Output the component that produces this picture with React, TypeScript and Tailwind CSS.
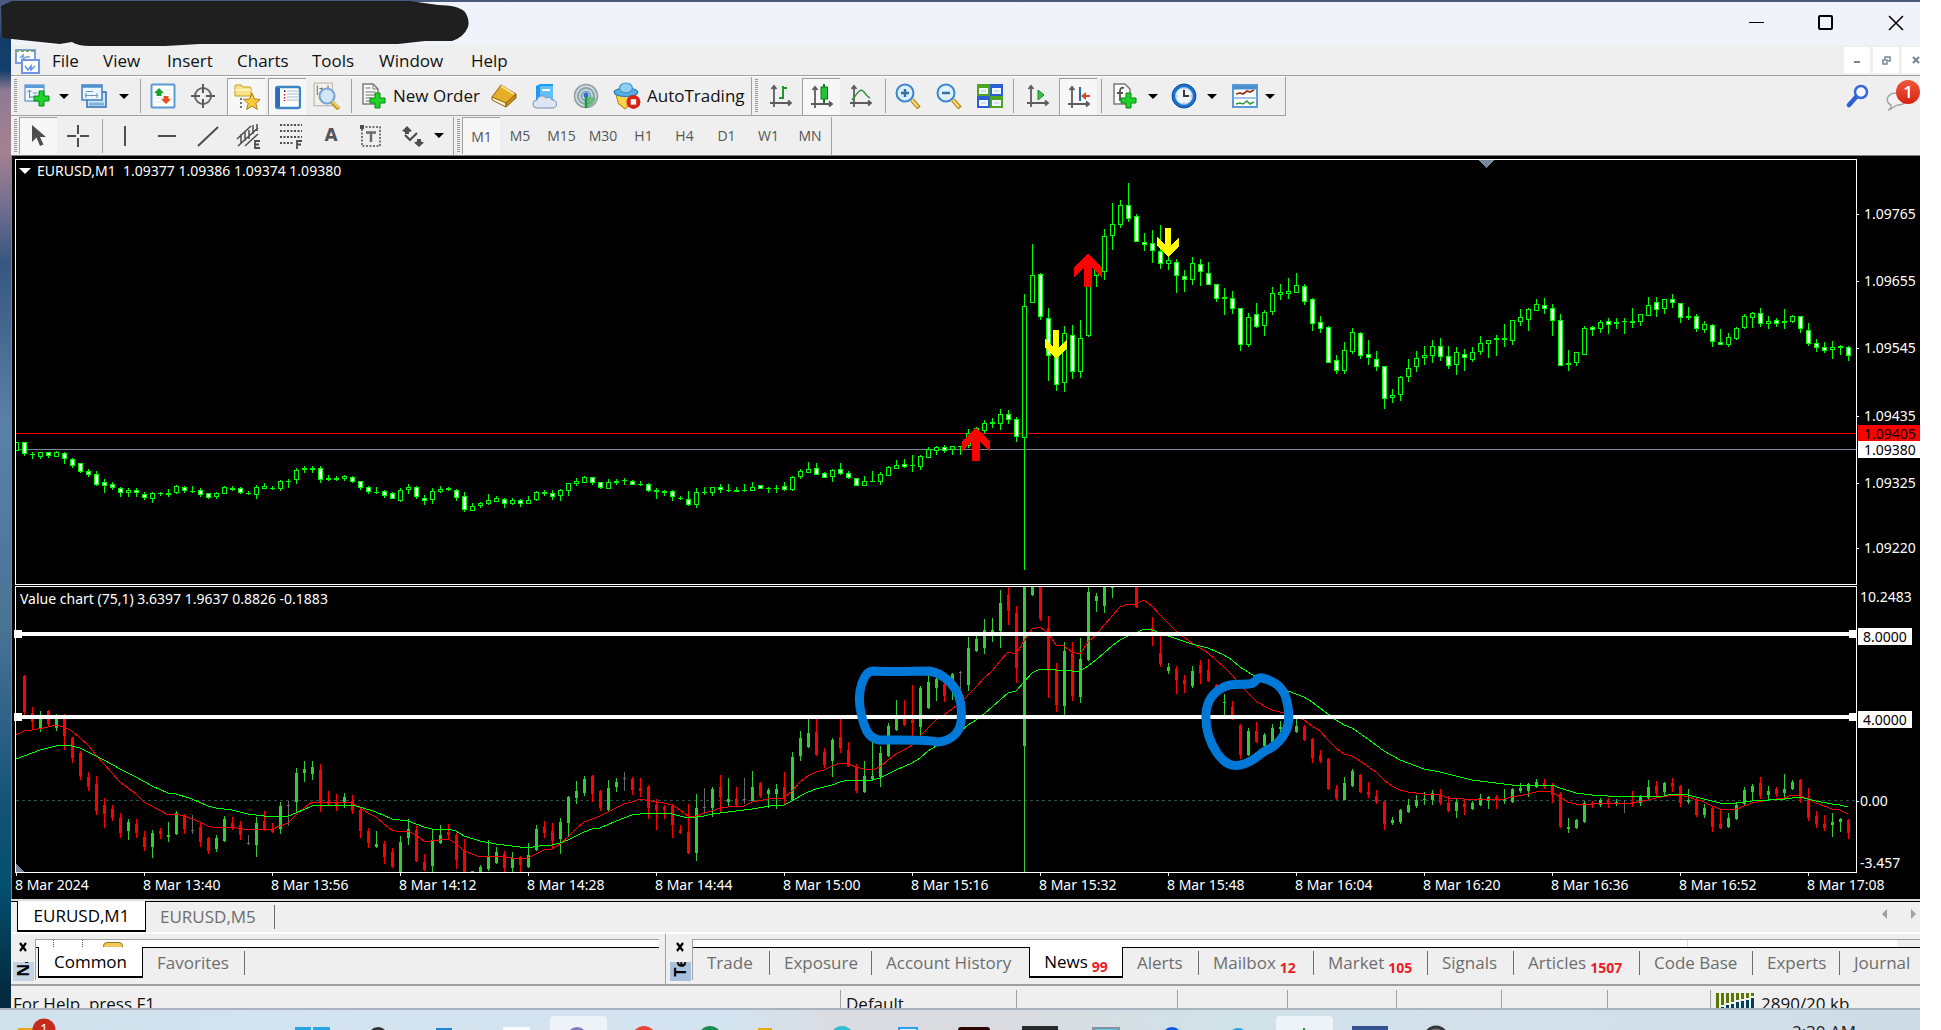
import React from "react";

/* ---------- Series data: kind + high, body top, body bottom, low in plot units ---------- */

const PRICE = `b442,442,451,451 w442,442,454,456 d452,454,455,459 b452,452,457,459 w452,452,456,458 b451,452,457,457 w452,453,459,464 w458,459,466,468 w463,463,472,473 w469,471,475,477
w471,474,485,486 w479,482,486,493 w482,484,488,490 w487,488,493,497 b488,490,493,497 w488,490,493,497 w492,494,498,500 b492,493,499,503 d492,493,494,496 d489,493,495,497
b485,486,493,494 w486,487,491,493 d486,491,492,493 w488,490,495,497 w493,493,498,499 b492,493,497,499 b486,487,494,494 d486,488,490,491 w487,488,493,494 d491,493,494,495
b485,487,495,499 b483,486,489,489 d486,488,489,490 b480,481,489,491 d479,481,482,488 b468,470,480,484 d466,468,470,473 d466,468,470,473 w466,468,480,483 d475,478,480,481
d476,478,480,481 b475,476,479,481 w476,477,482,483 w481,481,488,490 w486,487,492,494 d487,492,493,494 w490,491,496,498 w492,493,499,499 b488,490,501,502 b484,487,490,494
w486,487,497,499 w495,498,501,505 b488,491,500,504 b486,489,492,493 d487,488,490,491 w489,490,498,501 w492,496,510,512 b503,506,511,511 b502,503,506,508 b494,500,504,505
b496,498,502,502 w498,499,504,508 b498,500,504,505 w499,500,504,507 b496,500,504,504 b491,492,500,501 d490,492,494,496 w490,493,497,500 b489,490,496,501 b483,483,491,496
b478,481,484,486 b476,477,483,483 w477,477,483,485 w482,482,488,489 b479,482,489,489 d479,481,483,485 d478,480,481,485 w480,481,485,485 d481,484,485,486 w483,484,491,492
d488,490,492,499 d490,491,493,496 w490,491,497,501 d496,498,499,500 w491,499,505,506 b488,492,505,508 d487,492,493,495 b487,487,493,496 w484,487,490,493 d484,490,491,492
d487,490,492,492 d484,490,491,492 b482,487,491,491 w485,485,489,489 d487,488,489,493 d485,488,489,493 w482,486,490,491 b476,477,490,491 b469,471,477,479 b462,469,473,473
w463,468,475,475 w472,473,478,478 b469,470,477,482 w463,469,474,475 w471,473,478,479 w478,478,486,486 b476,481,486,486 d471,481,482,482 b472,474,482,485 b466,467,476,476
b460,465,469,469 w459,464,467,468 d455,465,466,472 b455,456,467,470 b447,449,458,458 b446,447,451,455 w445,447,451,453 b446,446,450,455 d446,446,447,455 b429,433,446,448
b427,428,436,437 b420,423,431,433 d418,422,424,428 b409,414,424,430 w410,414,420,424 w417,419,437,442 b294,306,438,570 b244,275,303,303 w273,274,317,320 w308,318,356,381
w340,345,385,391 b326,333,383,392 w325,335,372,379 b320,338,372,378 b283,283,336,337 b262,265,276,287 b229,236,272,280 b203,224,236,250 b200,205,225,228 w183,205,219,222
w214,216,242,242 w233,242,245,251 w230,243,251,263 w225,251,264,269 b256,260,264,270 w259,262,276,293 w270,276,280,292 b257,263,280,285 w259,264,272,286 w262,273,285,285
w284,284,299,302 d288,297,299,315 w291,298,309,314 w308,308,345,351 b313,317,345,347 w303,314,327,328 b310,312,326,336 b287,293,312,315 b284,292,295,300 b278,291,294,299
b273,285,293,293 w284,286,302,305 w298,299,324,331 w316,322,329,333 w326,327,363,363 w355,360,371,374 b342,350,371,374 b328,332,352,354 w332,333,356,359 w340,354,358,365
w351,359,367,371 w366,366,399,409 b389,395,398,403 b376,377,395,401 b359,368,377,382 b351,358,367,372 b346,355,358,365 b340,346,356,363 w338,346,357,361 w346,356,366,369
b347,352,365,375 w349,354,358,371 b347,352,360,362 b336,343,352,355 b340,340,344,358 d335,338,340,356 d324,338,340,347 b320,320,341,345 b309,317,322,326 b308,309,320,331
b299,304,311,311 w298,305,309,314 w304,308,321,336 w314,320,366,366 d350,363,365,371 b352,352,363,366 b326,328,355,355 w326,327,330,336 b320,322,329,333 w318,321,325,334
d318,322,324,329 d318,321,322,334 d308,321,323,328 b314,314,322,326 b297,305,316,316 w297,302,310,317 b299,299,309,314 w294,299,303,308 w303,303,318,323 d307,316,318,320
w314,316,329,332 b321,324,330,333 w324,325,342,347 w329,342,345,345 b333,337,345,347 b327,328,339,340 b314,316,328,329 b312,313,318,328 w308,313,324,327 b316,321,324,329
w318,320,324,327 d309,321,323,329 b315,316,322,323 w316,316,329,333 w323,330,344,346 w339,343,348,352 w342,347,351,353 b341,347,350,359 d345,346,348,355 w346,347,356,361`;

const VALUE = `n r675,676,712,715 r707,713,722,730 g711,717,728,732 r710,711,724,727 g714,717,728,731 r714,715,736,750 r737,738,758,763 r751,753,776,780 r772,777,787,791
r776,784,811,815 r798,805,814,828 r805,809,818,821 r813,818,833,838 g819,822,831,840 r819,824,833,838 r831,837,847,851 g830,833,847,858 r828,831,834,839 g822,835,837,842
g811,813,834,835 r814,816,829,834 x815,830,831,834 r822,827,842,847 r837,838,851,854 g835,838,849,852 g816,819,841,842 r817,823,828,830 r821,825,835,840 x835,843,844,845
g817,823,845,857 r811,821,830,831 r823,829,832,833 g802,806,829,834 x801,805,806,826 g768,773,802,813 g761,769,773,782 g761,767,774,780 r764,770,803,812 r791,801,804,806
r794,802,806,811 g793,797,803,808 r795,801,811,814 r809,810,831,838 r828,831,843,848 g831,844,847,848 r841,844,857,864 r848,852,867,868 g836,842,872,872 g819,829,838,845
r826,830,861,862 r854,862,870,871 g830,840,866,872 g825,835,843,844 r824,832,835,839 r833,835,860,869 r839,850,872,872 g871,871,872,872 g865,867,872,872 g840,857,869,871
g847,852,863,864 r851,854,868,872 g852,858,868,872 r856,857,865,872 g843,855,867,868 g825,829,850,851 r821,827,833,838 r823,831,841,849 g818,822,839,854 g796,797,823,836
g781,791,798,804 g776,779,793,796 r775,776,794,802 r790,791,808,811 g780,788,810,811 g778,782,787,792 x772,778,779,791 r777,779,790,795 r778,788,791,797 r785,787,808,819
r799,805,810,830 r805,807,810,819 r804,806,825,838 r825,830,833,834 r804,832,853,854 g794,808,853,861 x788,807,808,814 g787,789,808,817 r775,787,797,812 g778,799,802,806
r787,799,805,806 x778,799,800,804 g771,787,801,802 r782,783,796,798 g788,790,794,808 g784,789,794,809 r772,787,799,805 g752,757,800,801 g731,738,756,761 g717,733,747,748
r717,732,755,756 r748,752,765,768 g738,740,761,777 r717,737,748,753 r742,750,766,767 r764,766,791,793 g761,776,792,793 g740,776,779,781 g746,753,777,787 g723,726,756,757
g700,715,730,731 r700,715,725,726 r685,720,723,740 g686,688,727,737 g675,682,708,709 g675,679,688,701 r680,684,696,702 g673,674,689,700 x671,672,673,689 g637,648,685,691
g636,639,651,652 g619,630,648,654 g618,630,632,642 g590,603,631,648 r587,595,611,625 r606,613,668,683 g587,587,746,872 g587,587,595,596 r587,587,619,621 r616,628,671,698
r663,670,705,712 g642,651,706,715 r642,653,696,701 g638,659,697,703 g587,592,660,661 g593,596,601,612 g587,587,606,613 g587,587,588,598 n n
r587,587,607,608 n r617,628,636,646 r636,653,664,667 g663,667,671,674 r666,669,680,694 r675,680,684,693 g666,671,686,688 r660,665,673,684 r659,670,681,682
r684,685,692,694 g694,702,703,716 r701,707,717,720 r724,725,755,759 g728,731,755,756 r722,731,742,743 g733,735,746,748 g724,728,742,743 g721,727,729,732 n
g719,726,732,733 r725,727,740,741 r738,739,758,763 r750,755,761,763 r758,759,789,790 r785,789,798,800 g777,783,800,800 g769,771,786,787 r774,775,792,793 r782,792,795,798
r790,796,802,804 r801,802,824,830 g817,820,823,825 g809,810,822,824 g799,805,812,813 g795,800,806,808 g792,799,800,805 g790,793,800,805 r789,794,803,805 r796,803,811,812
g799,802,811,818 r800,804,807,815 g801,803,809,810 g794,798,805,806 g796,797,801,809 r795,797,799,809 g789,799,801,804 g788,789,802,803 g783,788,791,793 g783,784,791,797
g779,782,787,788 r779,783,787,789 r783,785,795,803 r792,794,827,828 g818,827,829,833 g819,820,828,829 g801,803,822,823 r801,803,805,808 g798,800,805,807 r798,801,804,808
g799,802,804,806 x800,803,804,813 r791,802,804,807 g795,796,803,806 g780,787,798,799 r781,786,793,797 g782,783,792,796 r778,783,787,792 r785,786,803,807 g789,800,802,804
r797,799,815,817 g804,808,815,818 r806,808,827,832 r810,824,828,829 g813,818,827,828 g803,805,819,820 g787,790,804,805 g784,786,792,800 r777,783,796,799 g786,791,795,801
r787,789,794,797 g774,789,793,800 g780,782,789,790 r779,780,799,803 r788,798,818,821 r811,816,824,828 r815,824,828,831 g813,822,825,837 g818,819,822,832 r819,820,833,839`;

const FAST = `0,735 1,731 2,730 4,727 5,725 6,727 7,731 8,738 9,745 10,755 11,764 12,773 13,782 15,794 16,802 17,806 19,815 20,814 21,816 22,819 23,822 24,826 25,828 27,827 29,830 31,829 32,829 33,826 34,823 35,815 36,808 37,802 40,802 42,803 43,808 44,813 45,817 46,824 47,830 48,832 49,831 50,835 51,841 52,841 54,839 55,843 56,851 57,854 58,857 60,856 62,858 63,859 64,858 65,854 66,850 67,849 68,844 69,837 70,829 71,822 73,816 74,812 75,808 76,804 77,802 78,799 80,802 81,803 82,805 83,810 84,816 85,816 86,813 87,811 88,808 89,807 91,806 92,802 94,799 96,798 97,791 98,782 99,776 100,772 101,770 102,766 103,763 104,764 105,767 106,769 107,770 108,767 109,760 110,754 111,750 112,745 113,736 114,728 115,720 116,715 117,709 118,703 119,695 120,687 121,678 122,671 123,661 124,652 125,654 126,641 127,629 128,627 129,633 130,645 131,646 132,652 133,654 134,642 135,635 136,625 137,616 138,607 139,604 140,604 141,600 142,606 143,615 144,623 145,631 147,643 149,653 150,660 151,667 152,675 153,685 154,693 155,701 156,706 157,710 158,712 159,714 160,716 161,720 162,726 163,731 164,740 165,748 166,754 167,756 168,761 170,772 171,780 172,786 173,790 174,792 176,794 178,795 179,798 181,799 183,800 186,799 187,797 189,794 190,792 191,791 192,792 193,797 194,802 195,804 197,804 198,803 202,803 204,800 205,798 207,795 208,795 209,797 211,802 212,806 213,809 215,809 216,806 217,803 219,800 221,798 222,795 223,796 224,799 225,803 226,806 227,809 228,810 229,814`;

const SLOW = `0,759 1,756 3,750 5,746 6,745 7,746 8,748 9,752 10,756 11,760 13,769 15,777 17,786 19,793 20,794 22,799 24,806 25,808 27,810 29,814 32,817 34,816 35,813 37,806 40,805 42,805 43,807 45,812 47,819 49,821 50,824 51,827 52,829 54,829 55,831 56,836 58,841 60,844 62,846 64,848 66,845 67,845 68,843 69,840 71,832 72,829 73,828 75,821 77,815 78,814 81,813 82,814 83,816 84,818 86,816 87,814 90,811 92,809 95,805 96,805 97,801 98,796 99,792 100,789 102,785 103,782 104,780 107,780 108,778 110,770 112,763 113,758 114,751 115,746 117,738 118,732 119,725 120,720 121,714 122,707 123,700 124,693 125,691 126,682 127,673 128,669 130,670 131,670 132,671 133,671 134,666 135,660 136,653 137,646 138,640 139,636 140,633 141,629 142,630 144,636 147,644 149,648 151,655 152,660 153,667 154,672 155,677 158,687 159,691 160,694 161,697 162,702 163,708 164,714 165,720 166,725 167,728 169,739 171,751 173,760 176,769 178,772 180,776 182,780 184,782 187,785 192,785 193,788 195,793 197,795 199,796 202,797 204,796 206,796 207,794 209,795 211,799 213,803 215,803 217,801 221,799 223,797 225,801 227,804 228,805 229,807`;

type Bar = { kind: string; x: number; v: number[] };

const parse = (s: string): Bar[] =>
  s.split(/\s+/).map((t, i) => ({ kind: t[0], x: 16 + 8 * i, v: t.length > 1 ? t.slice(1).split(",").map(Number) : [] }));

const linePoints = (s: string) =>
  s.split(" ").map((p) => { const [i, y] = p.split(",").map(Number); return `${16 + 8 * i},${y}`; }).join(" ");

const priceBars = parse(PRICE);
const valueBars = parse(VALUE).filter((b) => b.kind !== "n");
const valueColor: Record<string, string> = { r: "#ff0000", g: "#32cd32", x: "#696969" };

function PricePlot() {
  return (
    <svg viewBox="16 160 1840 424" preserveAspectRatio="none" className="block h-[424px] w-full" shapeRendering="crispEdges">
      <rect x="16" y="433" width="1840" height="1" fill="#ff0000" />
      <rect x="16" y="449" width="1840" height="1" fill="#778899" />
      {priceBars.map(({ kind, x, v: [h, t, b, l] }) => (
        <g key={x}>
          <rect x={x} y={h} width="1" height={Math.max(1, l - h)} fill="#00ff00" />
          <rect x={x - 2} y={t} width="5" height={Math.max(1, b - t)} fill="#00ff00" />
          {b - t > 2 && <rect x={x - 1} y={t + 1} width="3" height={b - t - 2} fill={kind === "w" ? "#ffffff" : "#000000"} />}
        </g>
      ))}
      <path d="M1479 160h15l-7.5 8z" fill="#778899" />
      <g fill="#ff0000">
        <path d="M976 428l14 13v10l-10-9v19h-8v-19l-10 9v-10z" />
        <path d="M1088 254l14 13v10l-10-9v19h-8v-19l-10 9v-10z" />
      </g>
      <g fill="#ffff00">
        <path d="M1053 330h6v17l8-8v9l-11 11-11-11v-9l8 8z" />
        <path d="M1165 228h6v17l8-8v9l-11 11-11-11v-9l8 8z" />
      </g>
    </svg>
  );
}

function ValuePlot() {
  return (
    <svg viewBox="16 587 1840 285" preserveAspectRatio="none" className="block h-[285px] w-full" shapeRendering="crispEdges">
      <path d="M16 800.5H1856" stroke="#2f4f4f" strokeDasharray="3 3" />
      {valueBars.map(({ kind, x, v: [h, t, b, l] }) => (
        <g key={x} fill={valueColor[kind]}>
          <rect x={x} y={h} width="1" height={Math.max(1, l - h)} />
          <rect x={x - 1} y={t} width="3" height={Math.max(1, b - t)} />
        </g>
      ))}
      <polyline points={linePoints(FAST)} fill="none" stroke="#ff0000" />
      <polyline points={linePoints(SLOW)} fill="none" stroke="#00ff00" />
      <path d="M16 863l8 9h-8z" fill="#778899" />
      <rect x="16" y="632" width="1840" height="4" fill="#fff" />
      <rect x="16" y="715" width="1840" height="4" fill="#fff" />
      <g fill="none" stroke="#0078d7" strokeWidth="9" strokeLinecap="round" strokeLinejoin="round" shapeRendering="auto">
        <path d="M874 671C890 672 914 671 929 671C942 673 950 681 956 690C962 700 962 712 961 722C959 734 950 741 938 742C928 739 900 740 879 740C868 738 865 729 862 717C859 706 858 694 862 683C865 675 868 671 874 671Z" />
        <path d="M1253 683C1246 686 1233 682 1224 687C1211 693 1207 703 1206 713C1205 728 1209 741 1217 753C1224 763 1232 767 1240 765C1254 762 1258 755 1265 751C1275 747 1281 741 1286 731C1290 722 1289 709 1286 698C1283 688 1275 681 1262 678C1257 677 1256 681 1253 683" />
      </g>
    </svg>
  );
}

/* ---------- Icons ---------- */

const Svg = ({ s = 26, children }: { s?: number; children: React.ReactNode }) => (
  <svg width={s} height={s} viewBox="0 0 26 26" fill="none" className="shrink-0">{children}</svg>
);
const Plus = ({ x, y }: { x: number; y: number }) => (
  <path d={`M${x} ${y}h5v5h5v5h-5v5h-5v-5h-5v-5h5z`} fill="#1fd32a" stroke="#078a10" strokeWidth="1" />
);
const NewChartIcon = () => (
  <Svg><rect x="1" y="2" width="19" height="16" fill="#eef6fd" stroke="#3d7fc0" /><path d="M1 3.5h19" stroke="#5b9bd8" strokeWidth="3" /><path d="M5.5 15V7M3.5 9l2-2 2 2M9 10h4M5 14h8" stroke="#5f85ab" /><Plus x={15} y={8} /></Svg>
);
const ProfilesIcon = () => (
  <Svg><rect x="6" y="9" width="19" height="15" fill="#cfe6f8" stroke="#2f6fb4" strokeWidth="1.5" /><path d="M8 21h15" stroke="#7fb2de" strokeWidth="3" /><rect x="1" y="2" width="20" height="15" fill="#eaf5fd" stroke="#3d7fc0" strokeWidth="1.5" /><path d="M1 3.5h20" stroke="#4b8fd0" strokeWidth="2.5" /><path d="M4 12.5h13M5 10v5M16 10v5M5 8.5h7" stroke="#6d93b8" /></Svg>
);
const MarketIcon = () => (
  <Svg><rect x="1.5" y="1.5" width="23" height="23" rx="1" fill="#fff" stroke="#5a9bd5" strokeWidth="2" /><path d="M5 7h16M5 11h16M5 15h16M5 19h16" stroke="#dde6ee" /><path d="M9 5l5 5h-2.5v3h-5v-3H4z" fill="#18a52a" /><path d="M16 21l-5-5h2.5v-3h5v3H21z" fill="#e8501c" /></Svg>
);
const TargetIcon = () => (
  <Svg><circle cx="13" cy="13" r="8" stroke="#6b6b6b" strokeWidth="2" /><path d="M13 1v9M13 16v9M1 13h9M16 13h9" stroke="#5a5a5a" strokeWidth="2" /></Svg>
);
const NavigatorIcon = () => (
  <Svg><path d="M1 2q0-1 1-1h5l2 2h7q1 0 1 1v8H1z" fill="#fce38a" stroke="#c79a22" /><path d="M1 6h16" stroke="#fff6c9" strokeWidth="1.5" /><path d="M7 14v12" stroke="#444" strokeWidth="1.5" strokeDasharray="2 2" /><path d="M18 9l2.5 6 6 .4-4.7 4 1.6 6L18 22l-5.4 3.4 1.6-6-4.7-4 6-.4z" fill="#f9cb3a" stroke="#b27f14" /></Svg>
);
const TerminalIcon = () => (
  <Svg><rect x="1" y="3" width="24" height="21" rx="2" fill="#fff" stroke="#3c84c8" strokeWidth="2.5" /><path d="M3 4v19" stroke="#2a6db5" strokeWidth="4" /><path d="M12 7h11M12 10h11M12 13h11M12 16h11" stroke="#9fb8d0" /><path d="M9 6.5h1.5v1.5H9z" fill="#111" /><path d="M9.5 10v7" stroke="#e02020" strokeDasharray="1.5 1.5" strokeWidth="1.5" /></Svg>
);
const TesterIcon = () => (
  <Svg s={28}><rect x="1" y="1" width="17" height="21" fill="#f4f1ea" stroke="#b9b4a8" /><path d="M4 3v9M8 5v9M14 3v8M6 6h3M12 7h4" stroke="#77746c" /><circle cx="13" cy="13" r="7" fill="#cfe6f9" fillOpacity=".9" stroke="#7aa6d0" strokeWidth="2" /><path d="M18 19l6 6" stroke="#c89428" strokeWidth="4" /><path d="M18 18l6 6" stroke="#f7d774" strokeWidth="1.5" /></Svg>
);
const OrderIcon = () => (
  <Svg><path d="M2 1h10l5 5v15H2z" fill="#fbfbfb" stroke="#7b7b7b" strokeWidth="1.5" /><path d="M12 1v5h5" stroke="#7b7b7b" /><path d="M4.5 5h5M4.5 9h10M4.5 12h10M4.5 15h6M4.5 18h5" stroke="#6f6f6f" /><Plus x={14} y={10} /></Svg>
);
const GoldIcon = () => (
  <Svg><path d="M1 14L10 2l15 9-10 13z" fill="#e6ad26" stroke="#8e6110" /><path d="M1 14l14 6v4L1 17z" fill="#fff3c9" stroke="#8e6110" /><path d="M15 20l10-9v4l-10 9z" fill="#c88d18" stroke="#8e6110" /><path d="M10 3l13 8" stroke="#ffe58c" strokeWidth="2" /></Svg>
);
const CloudIcon = () => (
  <Svg><path d="M4 3l4-2h13v16H4z" fill="#1b9bf2" /><path d="M8 3h13v13H8z" fill="#63c0fb" /><path d="M10 7h8" stroke="#fff" strokeWidth="2" /><path d="M5 25a4 4 0 010-8 5 5 0 019-2 4 4 0 016 2 4 4 0 011 8z" fill="#dde5f3" stroke="#7c8db0" /></Svg>
);
const AntennaIcon = () => (
  <Svg><circle cx="13" cy="13" r="11.5" fill="#cfd8dc" stroke="#8d9da3" strokeWidth="1.5" /><circle cx="13" cy="13" r="8" stroke="#8ca3ad" strokeWidth="2" /><circle cx="13" cy="13" r="4.5" stroke="#6f99ba" strokeWidth="1.5" /><path d="M13 13v11a11 11 0 0010-9z" fill="#51b862" fillOpacity=".7" /><path d="M13 13v12" stroke="#1a9c33" strokeWidth="2.5" /><circle cx="13" cy="12" r="2.5" fill="#2f6fc4" /></Svg>
);
const RobotIcon = () => (
  <Svg s={28}><path d="M3 12h18l-2 7-8 6-6-5z" fill="#f7d24a" stroke="#b98a1c" /><ellipse cx="12" cy="9.5" rx="11" ry="4" fill="#58aee0" stroke="#2a7bb5" /><ellipse cx="12" cy="5.5" rx="6" ry="4.5" fill="#8fd0f2" stroke="#3d8fc6" /><circle cx="19" cy="18.5" r="6.5" fill="#d92218" /><rect x="16.5" y="16" width="5" height="5" fill="#fff" /></Svg>
);
const Axes = () => <path d="M6 3v21M2 20h21M3.5 6L6 3l2.5 3M20 17.5l3 2.5-3 2.5" stroke="#5c5c5c" strokeWidth="1.8" />;
const BarsIcon = () => <Svg><Axes /><path d="M15 3v13M15 5h4M11 15h4" stroke="#1c9a2c" strokeWidth="2" /></Svg>;
const CandlesIcon = () => <Svg><Axes /><path d="M15 0v19" stroke="#0c7a1a" strokeWidth="2" /><rect x="12" y="3" width="6.5" height="12" fill="#22c435" stroke="#0c7a1a" /></Svg>;
const LineIcon = () => <Svg><Axes /><path d="M4 17C9 11 12 5 15 8s4 6 7 7" stroke="#2f8f3b" strokeWidth="1.5" /></Svg>;
const ScrollIcon = () => <Svg><Axes /><path d="M13 7l6 5-6 5z" fill="#38c048" stroke="#128a24" /></Svg>;
const ShiftIcon = () => <Svg><Axes /><path d="M14 3v14" stroke="#1f6fb0" strokeWidth="2" /><path d="M15 12l5-4v3h4v2h-4v3z" fill="#d94a18" /></Svg>;
const Lens = ({ minus }: { minus?: boolean }) => (
  <Svg><path d="M17 17l7 8" stroke="#b98718" strokeWidth="4.5" /><path d="M17 17l6 7" stroke="#fadf7c" strokeWidth="2" /><circle cx="10" cy="10" r="8.5" fill="#dcf1fd" stroke="#3b86c9" strokeWidth="2" /><path d={minus ? "M6 10h8" : "M6 10h8M10 6v8"} stroke="#37719f" strokeWidth="2.5" /></Svg>
);
const TileIcon = () => (
  <Svg><path d="M0 1h13v12H0zM13 13h13v12H13z" fill="#4fa51f" /><path d="M13 1h13v12H13zM0 13h13v12H0z" fill="#2a5fd8" /><path d="M2 5h9v6H2zM15 5h9v6h-9zM2 17h9v6H2zM15 17h9v6h-9z" fill="#f2f8ff" /><path d="M4 8h5M17 8h5M4 20h5M17 20h5" stroke="#a9c4d8" /></Svg>
);
const IndicatorIcon = () => (
  <Svg><path d="M2 1h11l5 5v15H2z" fill="#fbfbfb" stroke="#7b7b7b" strokeWidth="1.5" /><path d="M12 5c-3-1-4 1-4 3v10M5 10h6" stroke="#555" strokeWidth="1.8" /><Plus x={14} y={10} /></Svg>
);
const ClockIcon = () => (
  <Svg><circle cx="13" cy="13" r="12" fill="#1c6fcc" stroke="#0f4f9c" /><circle cx="13" cy="13" r="8.5" fill="#eef5fb" stroke="#8fc0ee" /><path d="M13 7v6h5" stroke="#3a3a3a" strokeWidth="2" /><path d="M13 5.5v1M13 19.5v1M5.5 13h1M19.5 13h1" stroke="#666" /></Svg>
);
const TemplateIcon = () => (
  <Svg><rect x="1" y="2" width="24" height="22" fill="#fff" stroke="#5b9bd5" strokeWidth="2" /><path d="M1 4.5h24" stroke="#4a8fd0" strokeWidth="4" /><path d="M1 15h24" stroke="#7db2e0" strokeWidth="1.5" /><path d="M4 11l4-1 3 1 4-3 3 1 4-2" stroke="#9c2f1c" strokeWidth="1.8" /><path d="M4 21l4-1 3 1 4-3 3 3 4-2" stroke="#2f9b3a" strokeWidth="1.5" /></Svg>
);
const CursorIcon = () => <Svg><path d="M6 2v17l4.5-4.5L14 23l3.5-1.5L14 14h6z" fill="#4d4d4d" /></Svg>;
const CrossIcon = () => <Svg><path d="M13 2v9M13 15v9M2 13h9M15 13h9" stroke="#4d4d4d" strokeWidth="2" /></Svg>;
const VLineIcon = () => <Svg><path d="M13 3v20" stroke="#4d4d4d" strokeWidth="2" /></Svg>;
const HLineIcon = () => <Svg><path d="M4 13h18" stroke="#4d4d4d" strokeWidth="2" /></Svg>;
const TrendIcon = () => <Svg><path d="M3 23L23 4" stroke="#4d4d4d" strokeWidth="2" /></Svg>;
const ChannelIcon = () => (
  <Svg><path d="M1 16L15 3M2 23L22 5M9 23l13-12M5 11v9M9 8v10M13 7v9M17 2v9M21 1v7" stroke="#4d4d4d" strokeWidth="1.5" /><path d="M24 18h-5v7h5M19 21.5h4" stroke="#4d4d4d" strokeWidth="1.8" /></Svg>
);
const FiboIcon = () => (
  <Svg><path d="M2 2h22M2 8h22M2 14h22M2 20h14" stroke="#4d4d4d" strokeWidth="2" strokeDasharray="2 1.5" /><path d="M19 26v-8h5M19 21.5h4" stroke="#4d4d4d" strokeWidth="1.8" /></Svg>
);
const LabelIcon = () => (
  <Svg><rect x="4" y="4" width="18" height="19" stroke="#4d4d4d" strokeWidth="1.5" strokeDasharray="2 1.5" /><rect x="2" y="2" width="4" height="4" fill="#4d4d4d" /><path d="M8 9.5h10M13 9v10" stroke="#6b6b6b" strokeWidth="2.5" /></Svg>
);
const ShapesIcon = () => (
  <Svg><path d="M7 3l5 5-3 1v2H5V9L2 8zM19 24l-5-4.5 3-1V16h4v2.500l3 1z" fill="#4d4d4d" /><path d="M5 12l5 5 7-7" stroke="#4d4d4d" strokeWidth="2.2" /></Svg>
);
const AppIcon = () => (
  <Svg><rect x="1" y="2" width="19" height="13" fill="#fff" stroke="#7b9fd8" strokeWidth="2" /><path d="M1 3h19" stroke="#79a86b" strokeWidth="2" strokeDasharray="3 2" /><path d="M5 10l3-3v4l3-2h4" stroke="#6f9fe0" strokeWidth="1.5" /><rect x="7" y="12" width="17" height="13" fill="#fff" stroke="#6e96e8" strokeWidth="2" /><path d="M10 18l3 4 3-4v4l4-4" stroke="#5a8fe6" strokeWidth="1.5" /></Svg>
);

/* ---------- Toolbar pieces ---------- */

const pressed = "border-t border-l border-[#a0a0a0] bg-[#f7f7f7]";
const cell = "flex h-[37px] shrink-0 items-center justify-center";

const Tool = ({ label, className, children }: { label: string; className: string; children: React.ReactNode }) => (
  <button type="button" aria-label={label} className={`${cell} ${className}`}>{children}</button>
);
const Drop = ({ label, className }: { label: string; className: string }) => (
  <button type="button" aria-label={label} className={`${cell} ${className}`}>
    <span className="border-x-[5px] border-t-[5px] border-x-transparent border-t-black" />
  </button>
);
const Sep = ({ className }: { className: string }) => (
  <div className={`${cell} ${className}`}><div className="h-[34px] w-px bg-[#a0a0a0]" /></div>
);
const Grip = () => (
  <div className={`${cell} w-2`}>
    <div className="h-[34px] w-[3px] bg-[repeating-linear-gradient(#9a9a9a_0_1px,#efefef_1px_2px)]" />
  </div>
);

const menus = [
  ["File", "w-[51px]"], ["View", "w-16"], ["Insert", "w-[70px]"], ["Charts", "w-[75px]"],
  ["Tools", "w-[67px]"], ["Window", "w-[92px]"], ["Help", "w-16"],
];
const frames = [
  ["M5", "w-10"], ["M15", "w-[43px]"], ["M30", "w-10"], ["H1", "w-[41px]"],
  ["H4", "w-[41px]"], ["D1", "w-[43px]"], ["W1", "w-[41px]"], ["MN", "w-[42px]"],
];

function TitleBar() {
  return (
    <header className="relative flex h-[43px] items-center justify-end bg-[#f0f3f9] pb-0.5">
      <button type="button" aria-label="Minimize" className="flex h-full w-[69px] items-center justify-center"><span className="h-px w-[15px] bg-black" /></button>
      <button type="button" aria-label="Maximize" className="flex h-full w-[69px] items-center justify-center"><span className="size-[15px] rounded-[2px] border-2 border-black" /></button>
      <button type="button" aria-label="Close" className="flex h-full w-[60px] items-center justify-center pr-2.5 pl-[22px]">
        <svg width="16" height="16" viewBox="0 0 16 16" className="shrink-0"><path d="M1 1l14 14M15 1L1 15" stroke="#000" strokeWidth="1.5" /></svg>
      </button>
      <svg width="470" height="48" viewBox="0 0 470 48" className="absolute -top-0.5 -left-[11px] z-10">
        <path d="M1 6L12 1H410L438 5Q458 5 465 12Q470 20 468 27Q464 37 452 41L425 41L398 44L200 44L165 46L90 46Q78 46 72 42L60 44L2 38Z" fill="#1f1f1f" />
      </svg>
    </header>
  );
}

function MenuBar() {
  return (
    <nav className="flex h-[31px] items-center justify-between border-b border-[#a0a0a0] bg-[#efefef] pl-1 text-[17px] leading-6 text-[#111]">
      <div className="flex items-center pt-px">
        <div className="mr-[11px]"><AppIcon /></div>
        {menus.map(([m, w]) => <button key={m} type="button" className={`text-left ${w}`}>{m}</button>)}
      </div>
      <div className="flex gap-[3px] overflow-hidden">
        <button type="button" aria-label="Minimize chart" className="flex h-[26px] w-[26px] items-center justify-center bg-white pt-1"><span className="h-0.5 w-1.5 bg-[#778899]" /></button>
        <button type="button" aria-label="Restore chart" className="flex h-[26px] w-[26px] items-center justify-center bg-white">
          <svg width="9" height="9" viewBox="0 0 9 9" fill="none" stroke="#778899" strokeWidth="1.5"><path d="M3 3V1h5v4H6" /><path d="M1 4h4v4H1z" /></svg>
        </button>
        <button type="button" aria-label="Close chart" className="flex h-[26px] w-[18px] items-center justify-end bg-white">
          <svg width="8" height="8" viewBox="0 0 8 8" stroke="#778899" strokeWidth="2.2"><path d="M1 1l6 6M7 1L1 7" /></svg>
        </button>
      </div>
    </nav>
  );
}

function MainToolbar() {
  return (
    <div className="flex justify-between">
      <div className="flex h-10 items-center border-t border-r border-b border-t-white border-r-[#a0a0a0] border-b-[#a0a0a0] text-[17px] text-[#111]">
        <Grip />
        <Tool label="New chart" className="w-9"><NewChartIcon /></Tool>
        <Drop label="New chart options" className="w-[18px]" />
        <Tool label="Profiles" className="w-[42px]"><ProfilesIcon /></Tool>
        <Drop label="Profile options" className="w-[18px]" />
        <Sep className="w-3.5" />
        <Tool label="Market Watch" className="w-8"><MarketIcon /></Tool>
        <Tool label="Data Window" className="w-12"><TargetIcon /></Tool>
        <Tool label="Navigator" className={`w-[38px] ${pressed}`}><NavigatorIcon /></Tool>
        <Tool label="Terminal" className={`ml-[3px] w-[38px] ${pressed}`}><TerminalIcon /></Tool>
        <Tool label="Strategy Tester" className="w-[42px]"><TesterIcon /></Tool>
        <Sep className="w-1.5" />
        <button type="button" className="flex h-[37px] w-[129px] items-center gap-1.5 pl-[7px] whitespace-nowrap"><OrderIcon />New Order</button>
        <Tool label="MetaEditor" className="w-[42px]"><GoldIcon /></Tool>
        <Tool label="Cloud storage" className="w-10"><CloudIcon /></Tool>
        <Tool label="Signals" className="w-[42px]"><AntennaIcon /></Tool>
        <button type="button" className="flex h-[37px] w-36 items-center gap-1.5 pl-1.5 whitespace-nowrap"><RobotIcon />AutoTrading</button>
        <div className="h-[38px] w-px bg-[#a0a0a0]" />
        <Grip />
        <Tool label="Bar chart" className="w-[42px]"><BarsIcon /></Tool>
        <Tool label="Candlesticks" className={`w-[38px] ${pressed}`}><CandlesIcon /></Tool>
        <Tool label="Line chart" className="w-[42px]"><LineIcon /></Tool>
        <Sep className="w-1.5" />
        <Tool label="Zoom in" className="w-10"><Lens /></Tool>
        <Tool label="Zoom out" className="w-[42px]"><Lens minus /></Tool>
        <Tool label="Tile windows" className="w-10"><TileIcon /></Tool>
        <Sep className="w-1.5" />
        <Tool label="Auto scroll" className="w-[43px]"><ScrollIcon /></Tool>
        <Tool label="Chart shift" className={`w-[38px] ${pressed}`}><ShiftIcon /></Tool>
        <Sep className="w-2" />
        <Tool label="Indicators" className="w-10"><IndicatorIcon /></Tool>
        <Drop label="Indicator options" className="w-4" />
        <Tool label="Periods" className="w-[46px]"><ClockIcon /></Tool>
        <Drop label="Period options" className="w-2.5" />
        <Tool label="Templates" className="w-14"><TemplateIcon /></Tool>
        <Drop label="Template options" className="-ml-2 w-2.5" />
        <div className="w-2.5" />
      </div>
      <div className="flex items-center gap-3.5">
        <button type="button" aria-label="Search">
          <svg width="24" height="24" viewBox="0 0 24 24" fill="none"><path d="M3 21l8-9" stroke="#2f5fd0" strokeWidth="4.500" strokeLinecap="round" /><circle cx="15" cy="8" r="6" fill="#f4f7ff" stroke="#3767d6" strokeWidth="2.5" /></svg>
        </button>
        <button type="button" aria-label="Notifications" className="relative h-9 w-9">
          <svg width="36" height="36" viewBox="0 0 36 36" fill="none"><path d="M4 32c3-1 3-2 3-5-6-3-5-12 6-12s13 12 1 12c-4 0-6 5-10 5z" fill="#f3f3f6" stroke="#a2a2a8" strokeWidth="1.5" /></svg>
          <span className="absolute top-0.5 right-0 flex size-6 items-center justify-center rounded-full bg-gradient-to-b from-[#f0553a] to-[#d6200e] text-[17px] font-semibold text-white">1</span>
        </button>
      </div>
    </div>
  );
}

function DrawToolbar() {
  return (
    <div className="flex h-10 items-center border-b border-[#808080] text-[14px] text-[#555]">
      <Grip />
      <Tool label="Cursor" className={`w-[38px] ${pressed}`}><CursorIcon /></Tool>
      <Tool label="Crosshair" className="w-[42px]"><CrossIcon /></Tool>
      <Sep className="w-1.5" />
      <Tool label="Vertical line" className="w-10"><VLineIcon /></Tool>
      <Tool label="Horizontal line" className="w-[43px]"><HLineIcon /></Tool>
      <Tool label="Trendline" className="w-10"><TrendIcon /></Tool>
      <Tool label="Equidistant channel" className="w-[42px]"><ChannelIcon /></Tool>
      <Tool label="Fibonacci retracement" className="w-[42px]"><FiboIcon /></Tool>
      <button type="button" className={`${cell} w-[38px] font-['DejaVu_Sans',sans-serif] text-[17px] font-bold`}>A</button>
      <Tool label="Text label" className="w-[42px]"><LabelIcon /></Tool>
      <Tool label="Arrows" className="w-[42px]"><ShapesIcon /></Tool>
      <Drop label="Arrow options" className="w-2.5" />
      <div className="ml-[9px] h-[38px] w-px bg-[#a0a0a0]" />
      <Grip />
      <button type="button" className={`${cell} w-[38px] ${pressed}`}>M1</button>
      {frames.map(([f, w]) => <button key={f} type="button" className={`${cell} ${w}`}>{f}</button>)}
      <div className="h-[38px] w-px bg-[#a0a0a0]" />
    </div>
  );
}

/* ---------- Chart ---------- */

const priceTicks = [
  ["1.09765", "top-[46px]"], ["1.09655", "top-[113px]"], ["1.09545", "top-[180px]"],
  ["1.09435", "top-[248px]"], ["1.09325", "top-[315px]"], ["1.09220", "top-[380px]"],
];
const times = ["2024", "13:40", "13:56", "14:12", "14:28", "14:44", "15:00", "15:16", "15:32", "15:48", "16:04", "16:20", "16:36", "16:52", "17:08"];

const Handles = ({ className }: { className: string }) => (
  <>
    <span className={`absolute -left-0.5 size-2 bg-white ${className}`} />
    <span className={`absolute -right-px size-2 bg-white ${className}`} />
  </>
);

function Chart() {
  return (
    <section className="border-l border-[#808080] bg-black pt-[3px] pl-[3px] font-['Noto_Sans',sans-serif] text-[14px] leading-[18px] text-white">
      <div className="flex">
        <div className="min-w-0 flex-1 border border-white">
          <div className="relative">
            <PricePlot />
            <div className="absolute top-0.5 left-[3px] flex items-center gap-1.5 whitespace-pre">
              <span className="border-x-[6px] border-t-[6px] border-x-transparent border-t-white" />
              EURUSD,M1  1.09377 1.09386 1.09374 1.09380
            </div>
          </div>
        </div>
        <div className="relative w-[63px]">
          {priceTicks.map(([p, t]) => (
            <div key={p} className={`absolute left-0 flex items-center gap-[5px] ${t}`}><span className="h-px w-0.5 bg-white" />{p}</div>
          ))}
          <div className="absolute top-[266px] right-0 left-px h-4 bg-[#ff0000] pl-1.5 leading-[17px] text-black">1.09405</div>
          <div className="absolute top-[282px] right-0 left-px h-[17px] bg-white pl-1.5 leading-[17px] text-black">1.09380</div>
        </div>
      </div>
      <div className="mt-px flex">
        <div className="min-w-0 flex-1 border border-white">
          <div className="relative">
            <ValuePlot />
            <div className="absolute top-[3px] left-1 whitespace-nowrap">Value chart (75,1) 3.6397 1.9637 0.8826 -0.1883</div>
            <Handles className="top-[43px]" />
            <Handles className="top-[126px]" />
          </div>
        </div>
        <div className="relative w-[63px]">
          <div className="absolute top-[2px] left-[3px]">10.2483</div>
          <div className="absolute top-[42px] left-px h-[17px] w-[54px] bg-white pl-[5px] leading-[17px] text-black">8.0000</div>
          <div className="absolute top-[125px] left-px h-[17px] w-[54px] bg-white pl-[5px] leading-[17px] text-black">4.0000</div>
          <div className="absolute top-[206px] left-0 flex items-center gap-px"><span className="h-px w-0.5 bg-white" />0.00</div>
          <div className="absolute top-[268px] left-[3px]">-3.457</div>
        </div>
      </div>
      <div className="flex h-[26px] overflow-hidden">
        {times.map((t) => (
          <div key={t} className="w-32 shrink-0 whitespace-nowrap"><div className="ml-px h-[3px] w-px bg-white" />8 Mar {t}</div>
        ))}
      </div>
    </section>
  );
}

/* ---------- Bottom panels ---------- */

const terminalTabs = [
  { t: "Trade", w: "w-[77px]" }, { t: "Exposure", w: "w-[102px]" }, { t: "Account History", w: "w-[157px]", last: true },
  { t: "News", n: "99", w: "w-[94px]", on: true }, { t: "Alerts", w: "w-[76px]" }, { t: "Mailbox", n: "12", w: "w-[115px]" },
  { t: "Market", n: "105", w: "w-[114px]" }, { t: "Signals", w: "w-[86px]" }, { t: "Articles", n: "1507", w: "w-[126px]" },
  { t: "Code Base", w: "w-[113px]" }, { t: "Experts", w: "w-[87px]" }, { t: "Journal", w: "w-[82px]", last: true },
];

const Tab = ({ label, count, width, on, last }: { label: string; count?: string; width: string; on?: boolean; last?: boolean }) => (
  <button
    type="button"
    className={`flex h-[31px] shrink-0 items-center whitespace-nowrap ${width} ${
      on ? "-mt-px justify-center border-x border-b-2 border-black bg-white pt-px text-black" : "justify-between pb-0.5 pl-3.5 text-[#6d6d6d]"
    }`}
  >
    <span>{label}{count && <b className="relative top-1 ml-1 text-[14px] font-bold text-[#ed1c24]">{count}</b>}</span>
    {!on && !last && <span className="h-6 w-px bg-[#6d6d6d]" />}
  </button>
);

const SideCap = ({ text, tone }: { text: string; tone: string }) => (
  <div className="flex w-[24px] shrink-0 flex-col items-center pt-2">
    <button type="button" aria-label={`Close ${text}`} className="flex">
      <svg width="8" height="10" viewBox="0 0 8 10" stroke="#000" strokeWidth="2.2"><path d="M1 1l6 8M7 1L1 9" /></svg>
    </button>
    <div className={`mt-[10px] flex h-[19px] w-[21px] items-end justify-center overflow-hidden pb-1 ${tone}`}>
      <span className="rotate-180 text-[16px] leading-[20px] font-bold text-black [writing-mode:vertical-rl]">{text.slice(0, 2)}</span>
    </div>
  </div>
);

function ChartTabs() {
  return (
    <div className="border-t-2 border-b-2 border-t-[#dcdcdc] border-b-white bg-[#efefef]">
      <div className="flex h-[31px] justify-between border-t border-black pl-1.5 text-[17px]">
        <div className="flex">
          <Tab label="EURUSD,M1" width="w-[129px]" on />
          <Tab label="EURUSD,M5" width="w-[129px]" />
        </div>
        <div className="flex items-center gap-6 pr-1 pb-1.5">
          <button type="button" aria-label="Scroll tabs left" className="border-y-[5px] border-r-[5px] border-y-transparent border-r-[#a0a0a0]" />
          <button type="button" aria-label="Scroll tabs right" className="border-y-[5px] border-l-[5px] border-y-transparent border-l-[#a0a0a0]" />
        </div>
      </div>
    </div>
  );
}

function Panels() {
  return (
    <div className="flex h-[52px] border-b-2 border-[#a0a0a0] bg-[#efefef] text-[17px]">
      <div className="flex w-[655px] shrink-0 border-r border-[#a0a0a0] pr-1.5">
        <SideCap text="Navigator" tone="bg-[#c3d3e2]" />
        <div className="mt-[5px] mb-1 min-w-0 flex-1 border-t border-l border-[#a0a0a0]">
          <div className="flex h-[7px] overflow-hidden bg-white pl-[17px]">
            <span className="h-full border-l border-dotted border-[#555]" />
            <span className="ml-7 h-full border-l border-dotted border-[#555]" />
            <span className="mt-0.5 ml-5 h-3 w-5 rounded-t border border-[#9b7420] bg-[#f3c95b]" />
          </div>
          <div className="flex border-t border-black pl-0.5">
            <Tab label="Common" width="w-[105px]" on />
            <Tab label="Favorites" width="w-[102px]" />
          </div>
        </div>
      </div>
      <div className="flex min-w-0 flex-1 pl-0.5">
        <SideCap text="Terminal" tone="bg-[#a9c0dd]" />
        <div className="mt-[5px] mb-1 min-w-0 flex-1 border-t border-l border-[#a0a0a0]">
          <div className="flex h-[7px] bg-white">
            <span className="flex-1" /><span className="w-px bg-[#dcdcdc]" /><span className="w-[209px]" /><span className="w-[23px] bg-[#efefef]" />
          </div>
          <div className="flex overflow-x-clip border-t border-black">
            {terminalTabs.map((x) => <Tab key={x.t} label={x.t} count={x.n} width={x.w} on={x.on} last={x.last} />)}
          </div>
        </div>
      </div>
    </div>
  );
}

const cells = ["w-[161px]", "w-[110px]", "w-[109px]", "w-[105px]", "w-[106px]", "w-[103px]"];

function StatusBar() {
  return (
    <footer className="flex h-[22px] overflow-hidden bg-[#efefef] text-[17px] leading-6 text-[#111]">
      <div className="h-9 w-[829px] shrink-0 pt-1.5 pl-0.5">For Help, press F1</div>
      <div className="mt-1 h-9 w-[176px] shrink-0 border-l border-[#a0a0a0] pt-0.5 pl-[5px]">Default</div>
      {cells.map((w) => <div key={w} className={`mt-1 h-9 shrink-0 border-l border-[#a0a0a0] ${w}`} />)}
      <div className="mt-1 flex h-9 flex-1 gap-[7px] border-l border-[#a0a0a0] pl-[5px] whitespace-nowrap">
        <svg width="38" height="30" viewBox="0 0 38 30" className="mt-[3px] shrink-0" shapeRendering="crispEdges">
          {[0, 1, 2, 3, 4, 5, 6, 7].map((i) => (
            <g key={i}>
              <rect x={i * 5} y="0" width="3" height={i === 0 ? 30 : 13 - i * 1.4} fill="#5a7800" />
              {i > 0 && <rect x={i * 5} y={15 - i * 1.4} width="3" height="20" fill="#003f5c" />}
            </g>
          ))}
        </svg>
        <span className="pt-0.5">2890/20 kb</span>
      </div>
    </footer>
  );
}

const Taskbar = () => (
  <footer className="relative flex h-[22px] items-start justify-between overflow-hidden border-t-2 border-[#a9b3bf] bg-[linear-gradient(90deg,#cfe2ec,#d3e4f0_25%,#d3e4f0_38%,#dadbe0_44%,#d9dbe0_52%,#cfe2e8_65%,#d3dfeb_80%,#d0dbe8)]">
    <svg width="1480" height="20" viewBox="0 0 1480 20" className="shrink-0">
      <g fill="#edf3f9"><rect x="550" y="6" width="57" height="30" rx="4" /><rect x="1276" y="6" width="57" height="30" rx="4" /></g>
      <rect x="17" y="18" width="24" height="9" rx="3" fill="#f2a024" />
      <circle cx="44" cy="20" r="11.5" fill="#c42b1c" />
      <path d="M295 17h16v9h-16zM313 17h17v9h-17z" fill="#2aa5ea" />
      <circle cx="378" cy="27" r="10" fill="#333" /><path d="M436 18h16v5h-16z" fill="#1c86d8" />
      <rect x="503" y="17" width="27" height="9" fill="#fafafa" />
      <circle cx="577" cy="27" r="10" fill="#8278c4" /><circle cx="644" cy="28" r="12" fill="#ea4335" /><circle cx="710" cy="28" r="12" fill="#1a8a55" />
      <path d="M758 18h14v5h-14z" fill="#e6a817" /><circle cx="842" cy="28" r="12" fill="#30bfd0" />
      <rect x="899" y="18" width="18" height="9" fill="#dff3ff" stroke="#29a3f2" strokeWidth="2" />
      <rect x="958" y="17" width="32" height="9" rx="3" fill="#2d0404" /><rect x="1022" y="16" width="36" height="9" fill="#26282b" />
      <rect x="1092" y="17" width="28" height="9" fill="#87919b" /><path d="M1095 19h22v3h-22z" fill="#5bcbe8" />
      <circle cx="1172" cy="27" r="10" fill="#0c57e8" /><circle cx="1238" cy="28" r="10" fill="#29a0dd" />
      <path d="M1303 18h2v3h-2z" fill="#159c22" /><rect x="1352" y="16" width="36" height="9" fill="#33508f" />
      <circle cx="1436" cy="28" r="11" fill="#777" stroke="#33363b" strokeWidth="3" />
    </svg>
    <span className="absolute top-2.5 left-10 text-[14px] leading-[18px] text-white">1</span>
    <span className="mr-16 shrink-0 pt-2.5 text-[17px] leading-6 whitespace-nowrap text-[#222]">2:30 AM</span>
  </footer>
);

export default function App() {
  return (
    <div className="bg-white pr-[21px] font-['Open_Sans',sans-serif]">
      <div className="overflow-hidden">
        <div className="bg-[linear-gradient(#4b5b80_0,#44577a_2%,#123c68_4%,#133f6c_7%,#8e7a92_9%,#a48290_15%,#77708f_20%,#37577f_26%,#5a80a6_42%,#4b7396_62%,#135378_80%,#04506f_88%,#042b42_98%)] pt-0.5 pl-[11px]">
          <TitleBar />
          <MenuBar />
          <div className="bg-[#efefef]">
            <MainToolbar />
            <DrawToolbar />
          </div>
          <Chart />
          <ChartTabs />
          <Panels />
          <StatusBar />
        </div>
        <Taskbar />
      </div>
    </div>
  );
}
